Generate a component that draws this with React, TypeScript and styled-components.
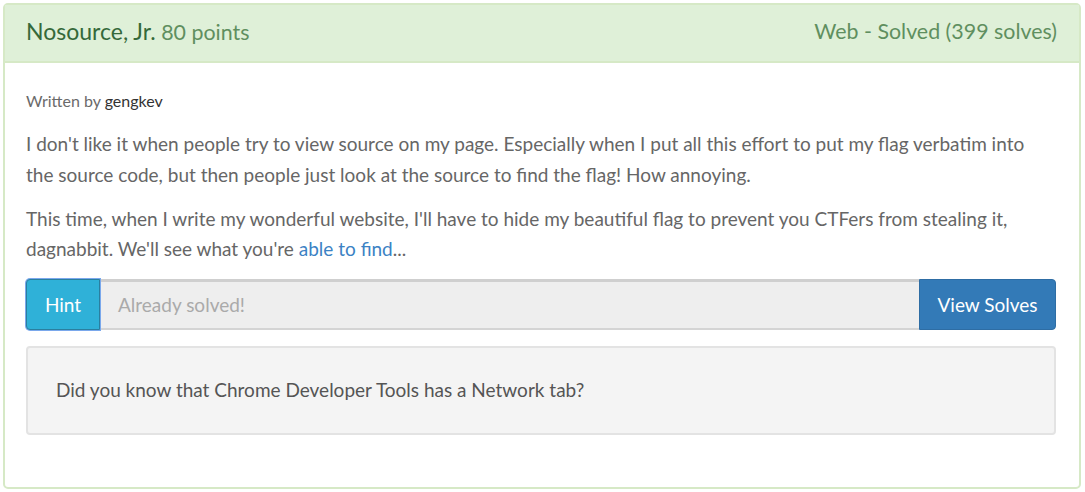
import React from "react";
import styled, { createGlobalStyle } from "styled-components";

const Global = createGlobalStyle`
  html, body { margin: 0; padding: 0; background: #ffffff; }
  body { font-family: Lato, "Liberation Sans", sans-serif; color: #555555; }
  * { box-sizing: border-box; }
`;

const Page = styled.div`
  padding: 3px 4px 3px 3px;
`;

const Panel = styled.div`
  border: 2px solid #d6e9c6;
  border-radius: 5px;
  background: #ffffff;
  height: 486px;
  display: flex;
  flex-direction: column;
`;

const PanelHeading = styled.div`
  background: #dff0d8;
  color: #3c763d;
  border-bottom: 2px solid #d6e9c6;
  height: 58px;
  padding: 0 22px 4px 21px;
  display: flex;
  align-items: center;
  justify-content: space-between;
  font-size: 21.4px;
`;

const Title = styled.span`
  font-weight: 400;
  font-size: 23px;
  color: #35693a;
`;

const Muted = styled.span`
  font-weight: 400;
  color: #5f8f5f;
`;

const PanelBody = styled.div`
  padding: 28px 23px 0 21px;
  display: flex;
  flex-direction: column;
`;

const Byline = styled.div`
  font-size: 16px;
  line-height: 20px;
  color: #6a6a6a;
  margin-bottom: 18px;
  b { font-weight: 400; color: #333; }
`;

const Para = styled.p`
  margin: 0 0 13.5px 0;
  font-size: 19px;
  line-height: 30.5px;
  color: #666;
  a { color: #3b82c4; text-decoration: none; }
`;

const InputGroup = styled.div`
  display: flex;
  height: 51px;
  margin-top: 1px;
`;

const HintButton = styled.button`
  background: #2fb1d8;
  color: #ffffff;
  border: 1px solid #2a7fa0;
  box-shadow: 0 0 0 1px #7aa8ec;
  border-radius: 4px 0 0 4px;
  width: 74px;
  font-family: inherit;
  font-size: 19px;
  padding: 0;
  position: relative;
`;

const FlagInput = styled.div`
  flex: 1;
  background: #eeeeee;
  border-top: 3px solid #cfcfcf;
  border-bottom: 2px solid #d4d4d4;
  color: #aaaaaa;
  font-size: 19px;
  display: flex;
  align-items: center;
  padding: 0 18px 1px;
`;

const SolvesButton = styled.button`
  background: #337ab7;
  color: #ffffff;
  border: 1px solid #2e6da4;
  border-radius: 0 4px 4px 0;
  width: 137px;
  font-family: inherit;
  font-size: 19px;
  padding: 0;
`;

const Well = styled.div`
  margin-top: 16px;
  background: #f4f4f4;
  border: 2px solid #e3e3e3;
  border-radius: 4px;
  height: 89px;
  display: flex;
  align-items: center;
  padding: 0 28px 2px;
  font-size: 19px;
  color: #555;
`;

export default function App() {
  return (
    <>
      <Global />
      <Page>
        <Panel>
          <PanelHeading>
            <span>
              <Title>Nosource, Jr.</Title> <Muted>80 points</Muted>
            </span>
            <Muted>Web - Solved (399 solves)</Muted>
          </PanelHeading>
          <PanelBody>
            <Byline>
              Written by <b>gengkev</b>
            </Byline>
            <Para>
              I don't like it when people try to view source on my page. Especially when I put all this effort to put my flag verbatim into the source code, but then people just look at the source to find the flag! How annoying.
            </Para>
            <Para>
              This time, when I write my wonderful website, I'll have to hide my beautiful flag to prevent you CTFers from stealing it, dagnabbit. We'll see what you're <a href="#">able to find</a>...
            </Para>
            <InputGroup>
              <HintButton>Hint</HintButton>
              <FlagInput>Already solved!</FlagInput>
              <SolvesButton>View Solves</SolvesButton>
            </InputGroup>
            <Well>Did you know that Chrome Developer Tools has a Network tab?</Well>
          </PanelBody>
        </Panel>
      </Page>
    </>
  );
}
